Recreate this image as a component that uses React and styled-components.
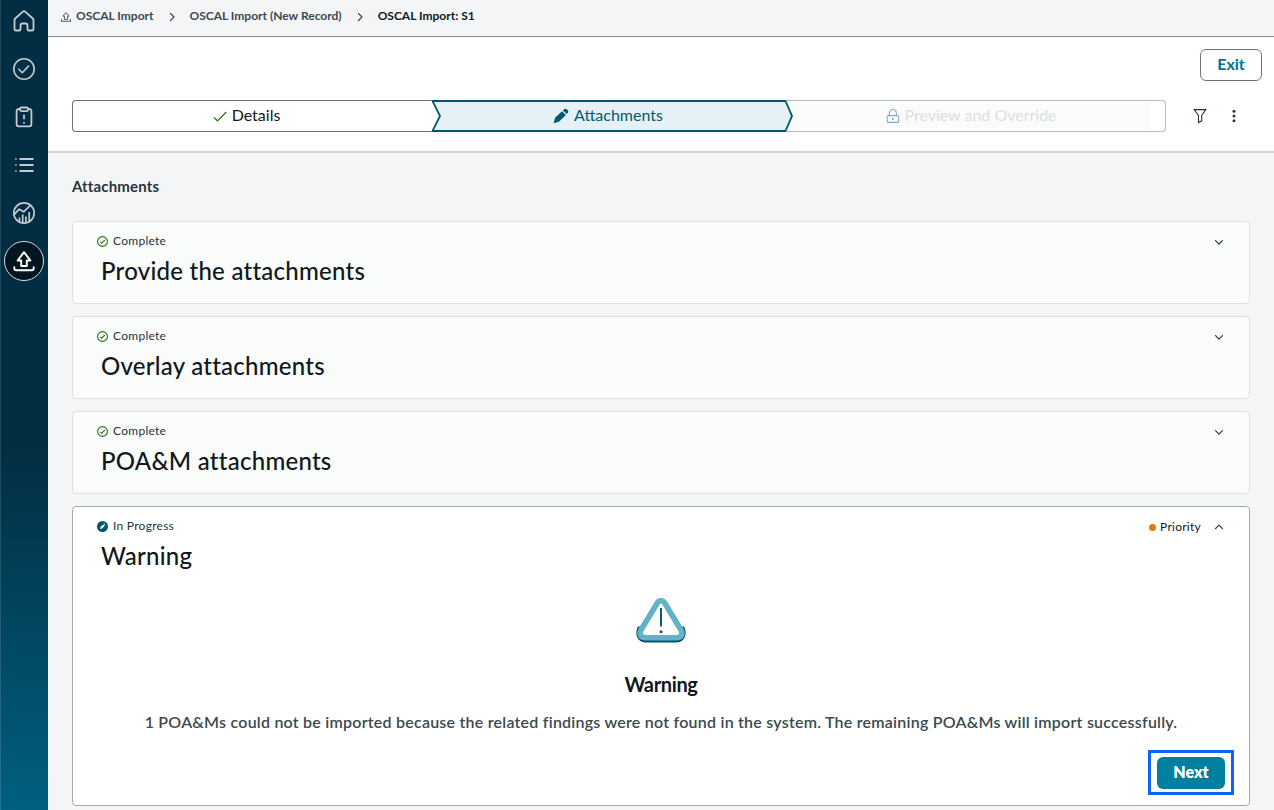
import React, { useState } from 'react';
import styled, { createGlobalStyle, css } from 'styled-components';


const GlobalStyle = createGlobalStyle`
  * {
    box-sizing: border-box;
  }
  body {
    margin: 0;
    font-family: Lato, "Open Sans", sans-serif;
    color: #10181c;
    background: #f4f5f7;
  }
  h1, h2, h3, p {
    margin: 0;
  }
  button {
    font-family: inherit;
    cursor: pointer;
  }
  svg {
    display: block;
    flex: none;
  }
`;

const Page = styled.div`
  display: flex;
  width: 1274px;
  height: 810px;
  overflow: hidden;
`;

const Sidebar = styled.nav`
  width: 48px;
  flex: none;
  display: flex;
  flex-direction: column;
  align-items: center;
  color: #c3ccd0;
  border-left: 1px solid rgba(255, 255, 255, 0.12);
  padding-right: 1px;
  background: linear-gradient(180deg, #032d42 0%, #032d42 55%, #00607f 100%);
`;

const NavItem = styled.button`
  width: 40px;
  height: 40px;
  margin: ${(props) => (props.$first ? '1px 0 4px' : '4px 0')};
  padding: 0;
  flex: none;
  display: flex;
  align-items: center;
  justify-content: center;
  border: 1px solid transparent;
  border-radius: 50%;
  background: none;
  color: inherit;
  ${(props) => props.$active && css`
    background: #021520;
    border-color: #d3dadd;
    color: #ffffff;
  `}
`;

const Content = styled.div`
  flex: 1;
  display: flex;
  flex-direction: column;
  min-width: 0;
`;

const Breadcrumbs = styled.div`
  height: 37px;
  flex: none;
  display: flex;
  align-items: flex-start;
  padding: 8px 0 0 13px;
  border-bottom: 1px solid #7f8e98;
  background: #f4f5f7;
`;

const Crumb = styled.span`
  display: flex;
  align-items: center;
  gap: 5px;
  font-size: 12px;
  line-height: 16px;
  font-weight: 700;
  white-space: nowrap;
  color: ${(props) => (props.$current ? '#10181c' : '#3c4950')};
  svg {
    margin-top: 2px;
  }
`;

const CrumbArrow = styled.span`
  width: 36px;
  height: 17px;
  display: flex;
  align-items: center;
  justify-content: center;
  color: #3c4950;
`;

const Header = styled.header`
  height: 116px;
  flex: none;
  background: #ffffff;
  border-bottom: 2px solid #cfd4d7;
  padding: 12px 12px 0 24px;
`;

const ExitRow = styled.div`
  display: flex;
  justify-content: flex-end;
`;

const ExitButton = styled.button`
  width: 62px;
  height: 32px;
  padding: 0 0 3px;
  border: 1px solid #66757e;
  border-radius: 6px;
  background: #ffffff;
  color: #00718f;
  font-size: 16px;
  font-weight: 700;
`;

const StepRow = styled.div`
  display: flex;
  align-items: center;
  margin-top: 19px;
`;

const Steps = styled.div`
  width: 1094px;
  height: 32px;
  display: grid;
  grid-template-columns: 360px 354px 380px;
`;

const Step = styled.div`
  display: flex;
  align-items: center;
  justify-content: center;
  gap: 5px;
  padding: 0 12px 2px 0;
  font-size: 16px;
  line-height: 20px;
  white-space: nowrap;
  border: 1px solid #66757e;
  border-right: none;
  border-radius: 4px 0 0 4px;
  background: #ffffff;
  svg {
    margin-top: 2px;
  }
`;

const LockedStep = styled(Step)`
  gap: 4px;
  padding-right: 8px;
  border: 1px solid #b5bbbe;
  border-left: none;
  border-radius: 0 4px 4px 0;
  color: #dcdfe1;
  background: linear-gradient(90deg, #fafcfc 364px, #ffffff 364px);
`;

const ActiveStep = styled(Step)`
  position: relative;
  z-index: 1;
  width: 361px;
  padding-right: 9px;
  border: none;
  color: #005a74;
  background: none;

  &::before,
  &::after {
    content: '';
    position: absolute;
    z-index: -1;
    inset: 0;
    background: #00566f;
    clip-path: polygon(-1px 0, 354px 0, 361px 16px, 354px 32px, -1px 32px, 7px 16px);
  }
  &::after {
    background: #e5f1f4;
    clip-path: polygon(2px 2px, 353px 2px, 359px 16px, 353px 30px, 2px 30px, 9px 16px);
  }
`;

const IconButton = styled.button`
  width: 34px;
  height: 32px;
  padding: 0;
  display: flex;
  align-items: center;
  justify-content: center;
  border: none;
  background: none;
  color: #27343b;
  &:first-of-type {
    margin-left: 17px;
  }
`;

const Main = styled.main`
  flex: 1;
  padding: 23px 24px 0;
`;

const SectionTitle = styled.h2`
  height: 45px;
  font-size: 15px;
  line-height: 20px;
  font-weight: 700;
  letter-spacing: 0.15px;
  color: #28353b;
`;

const CardList = styled.div`
  display: flex;
  flex-direction: column;
  gap: 12px;
`;

const Card = styled.section`
  height: ${(props) => (props.$open ? '300px' : '83px')};
  padding: 10px 24px 0;
  border: 1px solid ${(props) => (props.$open ? '#a3abb0' : '#dde1e4')};
  border-radius: 4px;
  background: ${(props) => (props.$open ? '#ffffff' : '#fafcfb')};
`;

const CardTop = styled.div`
  display: flex;
  align-items: center;
  justify-content: space-between;
  height: 17px;
`;

const Status = styled.span`
  display: flex;
  align-items: center;
  gap: 5px;
  font-size: 12px;
  line-height: 16px;
  letter-spacing: 0.27px;
  color: #27343b;
  svg {
    margin-top: 2px;
  }
`;

const CardActions = styled.div`
  display: flex;
  align-items: center;
  margin-top: 3px;
`;

const Toggle = styled.button`
  width: 12px;
  height: 16px;
  padding: 0;
  border: none;
  background: none;
  color: #27343b;
  display: flex;
  align-items: center;
  justify-content: center;
`;

const Priority = styled.span`
  display: flex;
  align-items: center;
  gap: 4px;
  margin-right: 12px;
  font-size: 12px;
  line-height: 16px;
  letter-spacing: 0.25px;
  color: #10181c;

  &::before {
    content: '';
    width: 7px;
    height: 7px;
    border-radius: 50%;
    background: #e2790f;
  }
`;

const CardTitle = styled.h3`
  margin: 7px 0 0 4px;
  font-size: 24px;
  line-height: 30px;
  font-weight: 500;
  letter-spacing: 0.25px;
`;

const Notice = styled.div`
  display: flex;
  flex-direction: column;
  align-items: center;
  padding-top: 26px;
`;

const NoticeTitle = styled.h1`
  margin-top: 28px;
  font-size: 20px;
  line-height: 26px;
  font-weight: 700;
  letter-spacing: -0.35px;
`;

const NoticeText = styled.p`
  margin-top: 15px;
  font-size: 16px;
  line-height: 20px;
  font-weight: 600;
  letter-spacing: 0.23px;
  white-space: nowrap;
  color: #3c4950;
`;

const CardFooter = styled.div`
  display: flex;
  justify-content: flex-end;
  margin-top: 25px;
`;

const NextButton = styled.button`
  width: 68px;
  height: 32px;
  padding: 0 0 2px;
  border: none;
  border-radius: 6px;
  background: #007f9f;
  color: #ffffff;
  font-size: 16px;
  font-weight: 800;
`;

const Highlight = styled.div`
  display: flex;
  align-items: center;
  justify-content: center;
  width: 86px;
  height: 45px;
  margin: -7px -9px 0 0;
  border: 3px solid #0f62fe;
`;


function Icon({ size = 24, box = 24, width = 1.8, children }) {
    return (
        <svg width={size} height={size} viewBox={`0 0 ${box} ${box}`} fill="none" stroke="currentColor"
            strokeWidth={width} strokeLinecap="round" strokeLinejoin="round">
            {children}
        </svg>
    );
}

function HomeIcon() {
    return (
        <Icon>
            <path d="M10.6 2.8 3.2 9.5c-.4.4-.7.9-.7 1.5v9.2c0 .8.6 1.3 1.3 1.3h3.4c.8 0 1.3-.6 1.3-1.3v-3.7a2 2 0 0 1 2-2h3a2 2 0 0 1 2 2v3.7c0 .8.6 1.3 1.3 1.3h3.4c.8 0 1.3-.6 1.3-1.3V11c0-.6-.3-1.1-.7-1.5l-7.4-6.7a2.1 2.1 0 0 0-2.8 0z" />
        </Icon>
    );
}

function CheckCircleIcon() {
    return (
        <Icon width={1.6}>
            <circle cx="12" cy="12" r="10.2" />
            <path d="m6.8 12.2 3.5 3.5 6.2-6.6" />
        </Icon>
    );
}

function ClipboardIcon() {
    return (
        <Icon>
            <path d="M8 4H6.6a2 2 0 0 0-2 2v13.3a2 2 0 0 0 2 2h10.8a2 2 0 0 0 2-2V6a2 2 0 0 0-2-2H16" />
            <rect x="8" y="2.5" width="8" height="3.6" rx="1.6" />
            <path d="M12 9.8v4.4M12 17v1.4" strokeLinecap="butt" />
        </Icon>
    );
}

function ListIcon() {
    return (
        <Icon>
            <path d="M7.5 6h14M7.5 12h14M7.5 18h14" strokeLinecap="butt" />
            <path d="M3 6h1.8M3 12h1.8M3 18h1.8" strokeLinecap="butt" opacity="0.6" />
        </Icon>
    );
}

function AnalyticsIcon() {
    return (
        <Icon width={1.7}>
            <circle cx="12" cy="12" r="10.2" />
            <path d="m2.2 13.4 4.9-5.2 4.6 2.6 6.5-6.3" />
            <path d="M7.5 21v-4.5M10.7 22v-8.5M13.9 22v-6.5M17.2 20.5V11" strokeLinecap="butt" />
        </Icon>
    );
}

function UploadIcon() {
    return (
        <Icon width={1.9}>
            <path d="M9.2 17v-5.5H5.6L12 3.2l6.4 8.3h-3.6V17z" />
            <path d="M2.3 18.2v1a2 2 0 0 0 2 2h15.4a2 2 0 0 0 2-2v-1" />
        </Icon>
    );
}

function CrumbUploadIcon() {
    return (
        <Icon size={10} box={10} width={0.9}>
            <path d="M3.4 7V4.1H1.9L5 .7l3.1 3.4H6.6V7z" />
            <path d="M.5 7.5v1.8h9V7.5" />
        </Icon>
    );
}

function Chevron({ d }) {
    return (
        <Icon size={10} box={10} width={1.2}>
            <path d={d} />
        </Icon>
    );
}

function DoneIcon() {
    return (
        <svg width="14" height="14" viewBox="0 0 14 14" fill="none" stroke="#2b7216" strokeWidth="1.2">
            <path d="m1 8.5 3.5 3.5L13.200 3" />
        </svg>
    );
}

function PencilIcon({ size = 16 }) {
    return (
        <svg width={size} height={size} viewBox="0 0 16 16" fill="currentColor">
            <path d="M.6 15.200l1.500-5.500 6.900-6.500 3.900 3.900-6.900 6.700zM9.900 2.400l1-1a2.200 2.200 0 0 1 3.100 0l.6.6a2.200 2.200 0 0 1 0 3l-.9 1.100z" />
        </svg>
    );
}

function LockIcon() {
    return (
        <svg width="14" height="16" viewBox="0 0 14 16" fill="none" stroke="#80b1c0" strokeWidth="1.1">
            <rect x="1.2" y="7.6" width="11.4" height="6.8" rx="1" />
            <path d="M3.4 7.6V4.8a3.5 3.5 0 0 1 7 0v2.8" />
            <circle cx="7" cy="11" r="1" fill="#80b1c0" stroke="none" />
        </svg>
    );
}

function FilterIcon() {
    return (
        <svg width="14" height="16" viewBox="0 0 14 16" fill="none" stroke="currentColor" strokeWidth="1.1">
            <path d="M1.2 1.6h11.6L8.7 7.5v5.3l-3.2 1.7v-7z" />
        </svg>
    );
}

function MoreIcon() {
    return (
        <svg width="4" height="14" viewBox="0 0 4 14" fill="currentColor">
            <circle cx="2" cy="2.2" r="1.5" />
            <circle cx="2" cy="7" r="1.5" />
            <circle cx="2" cy="11.8" r="1.5" />
        </svg>
    );
}

function CompleteIcon() {
    return (
        <svg width="11" height="11" viewBox="0 0 11 11" fill="none" stroke="#2b7216" strokeWidth="1.1">
            <circle cx="5.5" cy="5.5" r="4.9" />
            <path d="m3.2 5.8 1.5 1.5 3.1-3.3" />
        </svg>
    );
}

function ProgressIcon() {
    return (
        <svg width="11" height="11" viewBox="0 0 11 11">
            <circle cx="5.5" cy="5.5" r="5.5" fill="#00566f" />
            <path d="m3 8 .5-2 2.6-2.5 1.5 1.5L5 7.5zM6.5 3.1l.6-.5 1.4 1.4-.5.6z" fill="#ffffff" />
        </svg>
    );
}

function WarningIcon() {
    return (
        <svg width="50" height="46" viewBox="0 0 50 46" fill="none" strokeLinejoin="round">
            <path d="M2 29.5C-1.8 36.500 1.200 45.600 9.500 45.600h31c8.300 0 11.300-9.100 7.500-16.100z" fill="#00566f" />
            <path d="M21.3 6a4.2 4.2 0 0 1 7.4 0l16.3 27c2.2 4.2.2 7.7-4.2 7.700H9.200c-4.400 0-6.400-3.500-4.200-7.700z" fill="#ffffff" stroke="#62b2c9" strokeWidth="5.6" />
            <path d="M25 11v18.5" stroke="#00566f" strokeWidth="1.9" />
            <circle cx="25" cy="34.8" r="1.5" fill="#00566f" />
        </svg>
    );
}


const navItems = [
    { name: 'home', icon: <HomeIcon /> },
    { name: 'tasks', icon: <CheckCircleIcon /> },
    { name: 'issues', icon: <ClipboardIcon /> },
    { name: 'list', icon: <ListIcon /> },
    { name: 'analytics', icon: <AnalyticsIcon /> },
    { name: 'import', icon: <UploadIcon /> },
];

const completedCards = ['Provide the attachments', 'Overlay attachments', 'POA&M attachments'];


function StepBar() {
    return (
        <StepRow>
            <Steps>
                <Step><DoneIcon />Details</Step>
                <ActiveStep><PencilIcon />Attachments</ActiveStep>
                <LockedStep><LockIcon />Preview and Override</LockedStep>
            </Steps>
            <IconButton><FilterIcon /></IconButton>
            <IconButton><MoreIcon /></IconButton>
        </StepRow>
    );
}

function CompletedCard(props) {
    return (
        <Card>
            <CardTop>
                <Status><CompleteIcon />Complete</Status>
                <CardActions>
                    <Toggle><Chevron d="M1.5 3.7 5 7.2l3.5-3.5" /></Toggle>
                </CardActions>
            </CardTop>
            <CardTitle>{props.title}</CardTitle>
        </Card>
    );
}

function WarningCard() {
    return (
        <Card $open>
            <CardTop>
                <Status><ProgressIcon />In Progress</Status>
                <CardActions>
                    <Priority>Priority</Priority>
                    <Toggle><Chevron d="M1.5 6.7 5 3.2l3.5 3.5" /></Toggle>
                </CardActions>
            </CardTop>
            <CardTitle>Warning</CardTitle>
            <Notice>
                <WarningIcon />
                <NoticeTitle>Warning</NoticeTitle>
                <NoticeText>1 POA&amp;Ms could not be imported because the related findings were not found in the system. The remaining POA&amp;Ms will import successfully.</NoticeText>
            </Notice>
            <CardFooter>
                <Highlight><NextButton>Next</NextButton></Highlight>
            </CardFooter>
        </Card>
    );
}

function App() {
    const [active, setActive] = useState('import');

    return (
        <Page>
            <GlobalStyle />
            <Sidebar>
                {navItems.map((item, i) => (
                    <NavItem key={item.name} $first={i === 0} $active={item.name === active}
                        onClick={() => setActive(item.name)}>
                        {item.icon}
                    </NavItem>
                ))}
            </Sidebar>
            <Content>
                <Breadcrumbs>
                    <Crumb><CrumbUploadIcon />OSCAL Import</Crumb>
                    <CrumbArrow><Chevron d="M3.5 1.5 7 5 3.5 8.5" /></CrumbArrow>
                    <Crumb>OSCAL Import (New Record)</Crumb>
                    <CrumbArrow><Chevron d="M3.5 1.5 7 5 3.5 8.5" /></CrumbArrow>
                    <Crumb $current>OSCAL Import: S1</Crumb>
                </Breadcrumbs>
                <Header>
                    <ExitRow><ExitButton>Exit</ExitButton></ExitRow>
                    <StepBar />
                </Header>
                <Main>
                    <SectionTitle>Attachments</SectionTitle>
                    <CardList>
                        {completedCards.map((title) => (
                            <CompletedCard key={title} title={title} />
                        ))}
                        <WarningCard />
                    </CardList>
                </Main>
            </Content>
        </Page>
    );
}

export default App;
